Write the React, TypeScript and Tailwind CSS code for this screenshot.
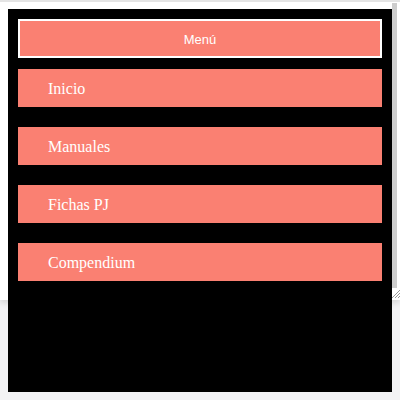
import React from "react";

const items = ["Inicio", "Manuales", "Fichas PJ", "Compendium"];

const App = () => {
    return (
        <div className="relative w-[400px] h-[400px] overflow-hidden bg-[#f3f3f5]">
            {/* host page area with scrollbar */}
            <div className="h-[300px] bg-white border-t-2 border-[#e4e4e4] shadow-[0_3px_6px_rgba(0,0,0,0.12)] flex justify-end">
                <div className="w-[8px] flex flex-col">
                    <div className="mt-[1px] w-[5px] h-[285px] bg-[#cdcdcd]" />
                    <svg width="8" height="10" viewBox="0 0 8 10" className="mt-[1px]">
                        <path d="M0 9 L8 1 M3 9 L8 4 M6 9 L8 7" stroke="#9a9a9a" strokeWidth="1" />
                    </svg>
                </div>
            </div>

            {/* embedded menu */}
            <div className="absolute left-[8px] top-[9px] w-[384px] h-[383px] bg-black p-[10px] flex flex-col">
                <div className="h-[39px] pt-[2px] border-2 border-white bg-[#fa8072] flex items-center justify-center text-white text-[13px] font-['Liberation_Sans',Arial,sans-serif]">
                    Menú
                </div>
                <nav className="mt-[11px] flex flex-col gap-[20px]">
                    {items.map((item) => (
                        <a
                            key={item}
                            className="h-[38px] pt-[2px] bg-[#fa8072] flex items-center pl-[30px] text-white text-[16px] font-['Liberation_Serif','Times_New_Roman',serif]"
                        >
                            {item}
                        </a>
                    ))}
                </nav>
            </div>
        </div>
    );
};

export default App;
